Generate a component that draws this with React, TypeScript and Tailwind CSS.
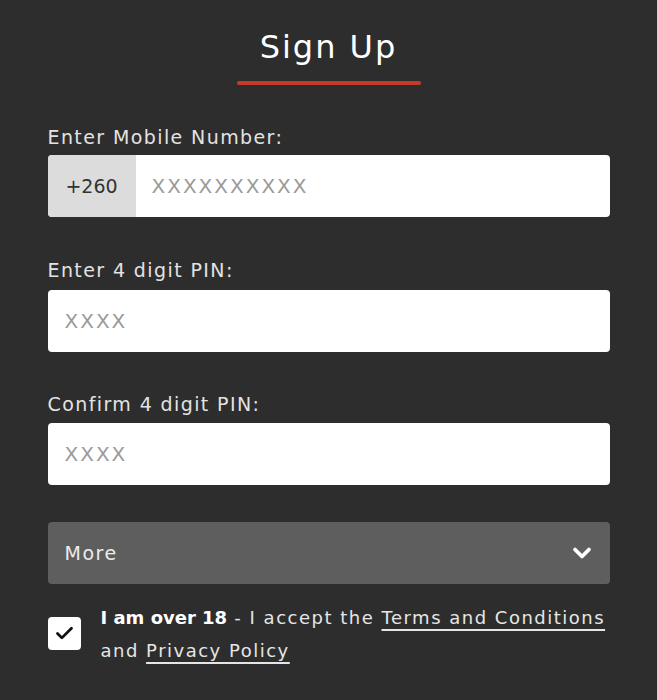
import { ChevronDown, Check } from "lucide-react";

const font = { fontFamily: '"DejaVu Sans", "Open Sans", sans-serif' };

export default function App() {
  return (
    <div className="min-h-[700px] w-full bg-[#2d2d2d] text-white" style={font}>
      <div className="mx-auto w-[562px] pt-[27px]">
        {/* Title */}
        <div className="flex flex-col items-center">
          <h1 className="text-[32px] leading-[40px] font-medium tracking-[2px] text-white">Sign Up</h1>
          <div className="mt-[14px] h-[4px] w-[184px] rounded-full bg-[#c43b2e]" />
        </div>

        {/* Mobile */}
        <label className="mt-[40px] block text-[19px] leading-[24px] tracking-[1.4px] text-[#e3e3e3]">Enter Mobile Number:</label>
        <div className="mt-[6px] flex h-[62px] overflow-hidden rounded-[4px] bg-white">
          <div className="flex w-[88px] items-center justify-center bg-[#dcdcdc] text-[19px] text-[#333]">+260</div>
          <input
            className="flex-1 px-[16px] text-[20px] tracking-[2px] text-[#333] outline-none placeholder:text-[#9a9a9a]"
            placeholder="XXXXXXXXXX"
          />
        </div>

        {/* PIN */}
        <label className="mt-[41px] block text-[19px] leading-[24px] tracking-[1.4px] text-[#e3e3e3]">Enter 4 digit PIN:</label>
        <input
          className="mt-[8px] block h-[62px] w-full rounded-[4px] bg-white px-[17px] text-[20px] tracking-[2px] text-[#333] outline-none placeholder:text-[#9a9a9a]"
          placeholder="XXXX"
        />

        {/* Confirm PIN */}
        <label className="mt-[40px] block text-[19px] leading-[24px] tracking-[1.4px] text-[#e3e3e3]">Confirm 4 digit PIN:</label>
        <input
          className="mt-[7px] block h-[62px] w-full rounded-[4px] bg-white px-[17px] text-[20px] tracking-[2px] text-[#333] outline-none placeholder:text-[#9a9a9a]"
          placeholder="XXXX"
        />

        {/* More */}
        <div className="mt-[37px] flex h-[62px] items-center justify-between rounded-[4px] bg-[#5e5e5e] pl-[17px] pr-[14px]">
          <span className="text-[19px] tracking-[1.5px] text-[#ececec]">More</span>
          <ChevronDown className="h-[28px] w-[28px] text-white" strokeWidth={3.2} />
        </div>

        {/* Terms */}
        <div className="mt-[17px] flex items-start gap-[20px]">
          <div className="mt-[16px] flex h-[33px] w-[33px] shrink-0 items-center justify-center rounded-[4px] bg-white">
            <Check className="h-[21px] w-[21px] text-[#111]" strokeWidth={3.2} />
          </div>
          <p className="-mr-[12px] text-[18px] leading-[33px] tracking-[1.5px] text-[#e6e6e6]">
            <span className="font-bold tracking-[0px] text-white">I am over 18</span> - I accept the{" "}
            <a className="underline decoration-[2px] underline-offset-[5px]">Terms and Conditions</a>
            <br />
            and <a className="underline decoration-[2px] underline-offset-[5px]">Privacy Policy</a>
          </p>
        </div>
      </div>
    </div>
  );
}
